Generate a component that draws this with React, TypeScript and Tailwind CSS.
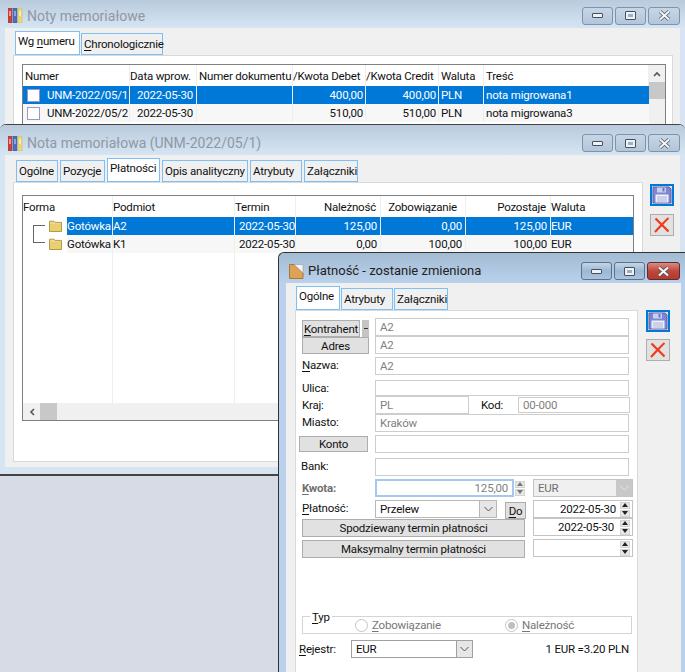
import type { ReactNode } from "react";

const font = "font-['Roboto',sans-serif] text-[11.5px] tracking-[-0.2px] leading-[16px] text-[#111]";

const Binders = () => (
  <svg width="15" height="15" viewBox="0 0 15 15" className="shrink-0">
    <rect x="0" y="0" width="4" height="15" fill="#c8413a" stroke="#a8322c" strokeWidth="0.5" />
    <rect x="5" y="0" width="4" height="15" fill="#4a6fc0" stroke="#35549a" strokeWidth="0.5" />
    <rect x="10" y="0" width="4" height="15" fill="#e8d777" stroke="#c9b655" strokeWidth="0.5" />
    <rect x="1.5" y="3" width="1" height="5" fill="#fff" />
    <rect x="6.5" y="3" width="1" height="5" fill="#cdd9f2" />
    <rect x="11.5" y="3" width="1" height="5" fill="#fff" />
  </svg>
);

const DocIcon = () => (
  <svg width="15" height="15" viewBox="0 0 15 15" className="shrink-0">
    <path d="M0.5 0.5H5L14 9V14.5H0.5Z" fill="#dfa254" stroke="#a8773a" />
    <path d="M5 0.5H14V9Z" fill="#f4f4f4" stroke="#9a9a9a" strokeWidth="0.6" />
  </svg>
);

const Folder = () => (
  <svg width="13" height="12" viewBox="0 0 13 12" className="shrink-0">
    <path d="M0.5 2V1.2H5L6 2.4H12.5V11.5H0.5Z" fill="#eed98a" stroke="#b49a45" />
    <rect x="1" y="4" width="11" height="7" fill="#e9cf72" />
  </svg>
);

const Floppy = () => (
  <svg width="20" height="18" viewBox="0 0 20 18">
    <path d="M1 1H17L19 3V17H1Z" fill="#7c86d4" stroke="#5a64ae" />
    <rect x="5" y="1.5" width="9" height="5" fill="#c9cfee" />
    <rect x="10.5" y="2" width="2" height="3.5" fill="#6a74c2" />
    <rect x="3.5" y="8.5" width="13" height="8" fill="#eef0fa" />
    <path d="M5 11H15M5 13H15M5 15H15" stroke="#aab0dc" />
  </svg>
);

const RedX = () => (
  <svg width="16" height="16" viewBox="0 0 16 16">
    <path d="M1.5 1.5C5 5 10 10 14.5 14.5M14.5 1C10 5 6 10 1 15" stroke="#ef3a1c" strokeWidth="2.2" fill="none" />
  </svg>
);

const TitleButton = ({ kind, active }: { kind: "min" | "max" | "close"; active?: boolean }) => {
  const look =
    kind === "close" && active
      ? "w-[33px] border-[#5e2a34] bg-[linear-gradient(#d98b80,#c0483a_50%,#b23a2e)]"
      : kind === "close"
        ? "w-[32px] border-[#7f93aa] bg-[linear-gradient(#c6d6e6,#b2c6da)]"
        : active
          ? "w-[31px] border-[#5d7188] bg-[linear-gradient(#c4d6e8,#9cb7d2_50%,#aac4de)]"
          : "w-[31px] border-[#7f93aa] bg-[linear-gradient(#c6d6e6,#b2c6da)]";
  return (
    <div className={`h-[18px] rounded-[3px] border flex items-center justify-center ${look}`}>
      {kind === "min" && <div className="w-[11px] h-[5px] bg-[#eef2f6] border border-[#46505c] rounded-[1px]" />}
      {kind === "max" && (
        <div className="w-[11px] h-[9px] bg-[#eef2f6] border border-[#46505c] rounded-[1px] flex items-center justify-center">
          <div className="w-[5px] h-[3px] bg-[#9fb0c2]" />
        </div>
      )}
      {kind === "close" && (
        <svg width="13" height="11" viewBox="0 0 13 11">
          <path d="M2 1.5L11 9.5M11 1.5L2 9.5" stroke="#46505c" strokeWidth="3.6" />
          <path d="M2 1.5L11 9.5M11 1.5L2 9.5" stroke="#f4f6f8" strokeWidth="2.2" />
        </svg>
      )}
    </div>
  );
};

const TitleBar = ({ title, icon, active, pt = "pt-[6px]" }: { title: string; icon: ReactNode; active?: boolean; pt?: string }) => (
  <div className={`flex items-center h-full pl-[8px] pr-[5px] ${pt}`}>
    {icon}
    <span className={`ml-[4px] whitespace-nowrap tracking-normal ${active ? "text-[13px] text-[#222]" : "text-[14px] text-[#8f98a4]"}`}>{title}</span>
    <div className="ml-auto flex gap-[2px]">
      <TitleButton kind="min" active={active} />
      <TitleButton kind="max" active={active} />
      <TitleButton kind="close" active={active} />
    </div>
  </div>
);

const Tab = ({ w, active, children }: { w: string; active?: boolean; children: ReactNode }) => (
  <div
    className={`${w} border border-[#7cc0f5] px-[2px] whitespace-nowrap flex items-center ${
      active ? "h-[24px] bg-white pb-[4px] -mt-[2px]" : "h-[22px] bg-[#f0f0f0]"
    }`}
  >
    {children}
  </div>
);

const U = ({ children }: { children: ReactNode }) => <span className="underline underline-offset-2">{children}</span>;

const GridCell = ({ w, right, className = "", children }: { w: string; right?: boolean; className?: string; children?: ReactNode }) => (
  <div className={`${w} shrink-0 h-full px-[2px] border-r border-[#eeeeee] whitespace-nowrap flex items-center ${right ? "justify-end" : ""} ${className}`}>
    {children}
  </div>
);

const Check = () => <div className="w-[13px] h-[13px] bg-white border border-[#9a9ac0] shrink-0 ml-[4px] mr-[7px]" />;

const notes = [
  { num: "UNM-2022/05/1", date: "2022-05-30", debet: "400,00", credit: "400,00", cur: "PLN", text: "nota migrowana1" },
  { num: "UNM-2022/05/2", date: "2022-05-30", debet: "510,00", credit: "510,00", cur: "PLN", text: "nota migrowana3" },
];

const Notes = () => (
  <div className="absolute left-0 top-0 w-[685px] h-[130px] bg-[#d7e5f3]">
    <div className="h-[28px] bg-[linear-gradient(#b9cbdc,#d6e5f3)]">
      <TitleBar title="Noty memoriałowe" icon={<Binders />} pt="pt-[3px]" />
    </div>
    <div className="mx-[5px] h-[102px] bg-[#f0f0f0] pt-[5px] px-[8px]">
      <div className="flex gap-[1px] pl-[2px]">
        <Tab w="w-[65px]" active>
          Wg&nbsp;<U>n</U>umeru
        </Tab>
        <Tab w="w-[82px]">
          <U>C</U>hronologicznie
        </Tab>
      </div>
      <div className="h-[80px] w-[660px] bg-white border-t border-x border-[#d9d9d9] pt-[8px] pl-[8px]">
        <div className="w-[644px] h-[62px] border-t border-x border-[#808080] flex">
          <div className="w-[626px]">
            <div className="h-[21px] flex">
              <GridCell w="w-[107px]">Numer</GridCell>
              <GridCell w="w-[67px]" className="!px-0">Data wprow.</GridCell>
              <GridCell w="w-[96px]">Numer dokumentu</GridCell>
              <GridCell w="w-[73px]" className="!px-0">/Kwota Debet</GridCell>
              <GridCell w="w-[73px]" className="!px-0">/Kwota Credit</GridCell>
              <GridCell w="w-[45px]">Waluta</GridCell>
              <GridCell w="w-[165px]">Treść</GridCell>
            </div>
            {notes.map((n, i) => (
              <div key={n.num} className={`h-[18px] flex ${i === 0 ? "bg-[#0078d7] text-white" : "bg-[#f7f7f7]"}`}>
                <GridCell w="w-[107px]" className="!px-0">
                  <Check />
                  {n.num}
                </GridCell>
                <GridCell w="w-[67px]" right className="pr-[3px]">{n.date}</GridCell>
                <GridCell w="w-[96px]" />
                <GridCell w="w-[73px]" right>{n.debet}</GridCell>
                <GridCell w="w-[73px]" right>{n.credit}</GridCell>
                <GridCell w="w-[45px]">{n.cur}</GridCell>
                <GridCell w="w-[165px]" className="border-r-0">{n.text}</GridCell>
              </div>
            ))}
          </div>
          <div className="w-[16px] bg-[#f0f0f0] flex flex-col">
            <div className="h-[17px] flex items-center justify-center">
              <svg width="8" height="6" viewBox="0 0 8 6">
                <path d="M1 5L4 2L7 5" stroke="#555" strokeWidth="1.6" fill="none" />
              </svg>
            </div>
            <div className="h-[17px] bg-[#c8c8c8]" />
          </div>
        </div>
      </div>
    </div>
  </div>
);

const rows = [
  { form: "Gotówka", who: "A2", nal: "125,00", zob: "0,00", poz: "125,00" },
  { form: "Gotówka", who: "K1", nal: "0,00", zob: "100,00", poz: "100,00" },
];

const Nota = () => (
  <div className="absolute left-0 top-[124px] w-[685px] h-[352px] bg-[#d7e5f3] border-t border-b-2 border-[#444] rounded-t-[6px]">
    <div className="h-[30px] bg-[linear-gradient(#b9cbdc,#d6e5f3)] rounded-t-[6px]">
      <TitleBar title="Nota memoriałowa (UNM-2022/05/1)" icon={<Binders />} />
    </div>
    <div className="mx-[5px] h-[312px] bg-[#f0f0f0] pt-[5px] px-[8px] flex">
      <div>
        <div className="flex gap-[2px] pl-[3px] items-end">
          <Tab w="w-[42px]">Ogólne</Tab>
          <Tab w="w-[45px]">Pozycje</Tab>
          <Tab w="w-[53px]" active>Płatności</Tab>
          <Tab w="w-[86px]">Opis analityczny</Tab>
          <Tab w="w-[52px]">Atrybuty</Tab>
          <Tab w="w-[54px]">Załączniki</Tab>
        </div>
        <div className="w-[630px] h-[280px] bg-white border border-[#d9d9d9] pt-[12px] pl-[8px]">
          <div className="w-[612px] h-[226px] border border-[#808080] flex flex-col">
            <div className="flex-1 relative">
              <div className="h-[21px] flex">
                <GridCell w="w-[90px]" className="!px-0">Forma</GridCell>
                <GridCell w="w-[122px]" className="!px-0">Podmiot</GridCell>
                <GridCell w="w-[61px]" className="!px-0">Termin</GridCell>
                <GridCell w="w-[85px]" right className="pr-[4px]">Należność</GridCell>
                <GridCell w="w-[85px]" right className="pr-[8px]">Zobowiązanie</GridCell>
                <GridCell w="w-[85px]" right className="pr-[4px]">Pozostaje</GridCell>
                <GridCell w="w-[82px]" className="border-r-0 !px-0">Waluta</GridCell>
              </div>
              {rows.map((r, i) => (
                <div key={r.who} className={`h-[18px] flex relative ${i === 0 ? "text-white" : ""}`}>
                  <div className="w-[44px] shrink-0 flex items-center justify-end pr-[5px]">
                    <Folder />
                  </div>
                  <div className={`flex flex-1 ${i === 0 ? "bg-[#0078d7]" : "bg-[#f7f7f7]"}`}>
                    <GridCell w="w-[46px]" className="!px-0">{r.form}</GridCell>
                    <GridCell w="w-[122px]" className="!px-0">{r.who}</GridCell>
                    <GridCell w="w-[61px]" right className="!px-0 pr-[1px]">2022-05-30</GridCell>
                    <GridCell w="w-[85px]" right className="pr-[3px]">{r.nal}</GridCell>
                    <GridCell w="w-[85px]" right className="pr-[3px]">{r.zob}</GridCell>
                    <GridCell w="w-[85px]" right className="pr-[3px]">{r.poz}</GridCell>
                    <GridCell w="w-[80px]" className="border-r-0 !px-0">EUR</GridCell>
                  </div>
                </div>
              ))}
              <div className="absolute left-[10px] top-[29px] w-[12px] h-[18px] border-l border-y border-[#666]" />
              {[90, 212, 273, 358, 443, 528].map((x) => (
                <div key={x} className="absolute top-[57px] bottom-0 w-px bg-[#eeeeee]" style={{ left: x - 1 }} />
              ))}
            </div>
            <div className="h-[17px] bg-[#f0f0f0] flex items-center">
              <div className="w-[17px] flex justify-center">
                <svg width="6" height="8" viewBox="0 0 6 8">
                  <path d="M5 1L2 4L5 7" stroke="#555" strokeWidth="1.6" fill="none" />
                </svg>
              </div>
              <div className="w-[17px] h-full bg-[#c8c8c8]" />
            </div>
          </div>
        </div>
      </div>
      <div className="ml-[7px] mt-[24px] flex flex-col gap-[8px]">
        <ActionButtons />
      </div>
    </div>
  </div>
);

const ActionButtons = () => (
  <>
    <div className="w-[24px] h-[22px] border-[2px] border-[#0078d7] bg-[#e1e1e1] flex items-center justify-center">
      <Floppy />
    </div>
    <div className="w-[24px] h-[22px] border border-[#adadad] bg-[#e1e1e1] flex items-center justify-center">
      <RedX />
    </div>
  </>
);

const Field = ({ value = "", w = "w-[254px]", right, dark, className = "" }: { value?: string; w?: string; right?: boolean; dark?: boolean; className?: string }) => (
  <div
    className={`${w} h-[18px] bg-white border border-[#cdcdcd] px-[4px] flex items-center whitespace-nowrap ${
      right ? "justify-end" : ""
    } ${dark ? "text-[#1a1a1a]" : "text-[#7f7f7f]"} ${className}`}
  >
    {value}
  </div>
);

const Btn = ({ w, h = "h-[17px]", children, className = "" }: { w: string; h?: string; children: ReactNode; className?: string }) => (
  <div className={`${w} ${h} bg-[#e1e1e1] border border-[#adadad] flex items-center justify-center whitespace-nowrap ${className}`}>
    {children}
  </div>
);

const Chevron = ({ color = "#555" }: { color?: string }) => (
  <svg width="9" height="6" viewBox="0 0 9 6">
    <path d="M0.5 1L4.5 5L8.5 1" stroke={color} fill="none" />
  </svg>
);

const Spin = ({ color = "text-[#222]" }: { color?: string }) => (
  <div className={`w-[10px] h-[15px] shrink-0 ${color} flex flex-col gap-[1px]`}>
    <div className="h-[7px] bg-[#e6e6e6] border border-[#d4d4d4] flex items-center justify-center">
      <div className="w-0 h-0 border-x-[3.5px] border-x-transparent border-b-[4px] border-b-current" />
    </div>
    <div className="h-[7px] bg-[#e6e6e6] border border-[#d4d4d4] flex items-center justify-center">
      <div className="w-0 h-0 border-x-[3.5px] border-x-transparent border-t-[4px] border-t-current" />
    </div>
  </div>
);

const DateRow = ({ value, pr = "pr-[2px]" }: { value?: string; pr?: string }) => (
  <div className="w-[100px] h-[18px] bg-white border border-[#c4c4c4] flex items-center justify-end gap-[2px] pr-[2px]">
    <span className={pr}>{value}</span>
    <Spin />
  </div>
);

const Label = ({ w = "w-[73px]", className = "", children }: { w?: string; className?: string; children: ReactNode }) => (
  <div className={`${w} shrink-0 whitespace-nowrap ${className}`}>{children}</div>
);

const Payment = () => (
  <div className="absolute left-[278px] top-[252px] w-[407px] h-[420px] bg-[#b9d1ea] border-t border-l border-[#333] rounded-tl-[6px]">
    <div className="h-[30px] bg-[linear-gradient(#a3bbd3,#b9d1ea)] rounded-tl-[6px] pl-[2px]">
      <TitleBar title="Płatność - zostanie zmieniona" icon={<DocIcon />} active />
    </div>
    <div className="ml-[7px] mr-[4px] h-[389px] bg-[#f0f0f0] pt-[5px] pl-[9px] flex">
      <div>
        <div className="flex gap-[1px] pl-[1px] items-end">
          <Tab w="w-[44px]" active>Ogólne</Tab>
          <Tab w="w-[52px]">Atrybuty</Tab>
          <Tab w="w-[54px]">Załączniki</Tab>
        </div>
        <div className="w-[343px] h-[362px] bg-white border-t border-l border-r border-[#d9d9d9] pt-[7px] pl-[6px]">
          <div className="flex">
            <div className="w-[73px] shrink-0 flex flex-col pt-[2px]">
              <div className="flex gap-[2px]">
                <Btn w="w-[58px]"><span><U>K</U>ontrahent</span></Btn>
                <div className="w-[7px] h-[17px] bg-[#c4c4c4] flex items-center justify-center">
                  <div className="w-[4px] h-px bg-[#333]" />
                </div>
              </div>
              <Btn w="w-[67px]">Adres</Btn>
            </div>
            <div className="flex flex-col">
              <Field value="A2" />
              <Field value="A2" />
            </div>
          </div>
          <div className="flex mt-[3px]">
            <Label><U>N</U>azwa:</Label>
            <Field value="A2" />
          </div>
          <div className="flex mt-[5px] items-center">
            <Label>Ulica:</Label>
            <Field className="!h-[16px]" />
          </div>
          <div className="flex items-center">
            <Label>Kraj:</Label>
            <Field value="PL" w="w-[94px]" />
            <Label w="w-[49px]" className="pl-[12px]">Kod:</Label>
            <Field value="00-000" w="w-[112px]" className="!h-[16px]" />
          </div>
          <div className="flex">
            <Label>Miasto:</Label>
            <Field value="Kraków" />
          </div>
          <div className="flex mt-[3px] items-center">
            <div className="w-[73px] shrink-0 -ml-[3px] mr-[3px]">
              <Btn w="w-[69px]" h="h-[16px]">Konto</Btn>
            </div>
            <Field />
          </div>
          <div className="flex mt-[5px]">
            <Label className="-ml-[1px] mr-[1px]">Bank:</Label>
            <Field />
          </div>
          <div className="flex mt-[3px] items-center">
            <Label className="font-bold text-[#6f6f6f]"><U>K</U>wota:</Label>
            <div className="w-[150px] flex items-center gap-[1px]">
              <Field value="125,00" right w="w-[141px]" className="!border-[#a4c8ee] border-2" />
              <Spin color="text-[#777]" />
            </div>
            <div className="w-[100px] h-[18px] ml-[8px] bg-[#f0f0f0] border border-[#c4c4c4] pl-[4px] flex items-center justify-between text-[#6f6f6f]">
              EUR
              <div className="w-[16px] h-full bg-[#c8c8c8] flex items-center justify-center">
                <Chevron color="#e6e6e6" />
              </div>
            </div>
          </div>
          <div className="flex mt-[3px]">
            <div className="w-[224px] shrink-0">
              <div className="flex h-[19px]">
                <Label><U>P</U>łatność:</Label>
                <div className="w-[122px] h-[18px] bg-white border border-[#b8b8b8] pl-[4px] flex items-center justify-between">
                  Przelew
                  <div className="w-[17px] h-full bg-[#e6e6e6] border-l border-[#b8b8b8] flex items-center justify-center">
                    <Chevron />
                  </div>
                </div>
                <Btn w="w-[21px]" className="ml-[8px] mt-[2px] relative"><span><U>D</U>o</span></Btn>
              </div>
              <Btn w="w-[223px]" h="h-[18px]">Spodziewany termin płatności</Btn>
              <Btn w="w-[223px]" h="h-[18px]" className="mt-[3px]">Maksymalny termin płatności</Btn>
            </div>
            <div className="ml-[7px] flex flex-col">
              <DateRow value="2022-05-30" />
              <DateRow value="2022-05-30" pr="pr-[4px]" />
              <div className="mt-[3px]">
                <DateRow />
              </div>
            </div>
          </div>
          <div className="relative mt-[58px] w-[330px] h-[18px] border border-[#d4d4d4] flex items-center">
            <div className="absolute left-[7px] -top-[7px] bg-white px-[2px] leading-[14px]"><U>T</U>yp</div>
            <div className="ml-[52px] w-[150px] flex items-center gap-[4px] text-[#777]">
              <div className="w-[13px] h-[13px] rounded-full border border-[#c4c4c4] bg-white" />
              <span><U>Z</U>obowiązanie</span>
            </div>
            <div className="flex items-center gap-[4px] text-[#777]">
              <div className="w-[13px] h-[13px] rounded-full border border-[#c4c4c4] bg-white flex items-center justify-center">
                <div className="w-[7px] h-[7px] rounded-full bg-[#c0c0c0]" />
              </div>
              <span><U>N</U>ależność</span>
            </div>
          </div>
          <div className="flex mt-[6px] items-center -ml-[3px]">
            <Label w="w-[52px]"><U>R</U>ejestr:</Label>
            <div className="w-[122px] h-[18px] bg-white border border-[#a0a0a0] pl-[4px] flex items-center justify-between">
              EUR
              <div className="w-[16px] h-full bg-[#e6e6e6] border-l border-[#a0a0a0] flex items-center justify-center">
                <Chevron />
              </div>
            </div>
            <div className="w-[156px] text-right">1 EUR =3.20 PLN</div>
          </div>
        </div>
      </div>
      <div className="ml-[8px] mt-[22px] flex flex-col gap-[7px]">
        <ActionButtons />
      </div>
    </div>
  </div>
);

export default function App() {
  return (
    <div className={`relative w-[685px] h-[672px] overflow-hidden bg-[#d6dbe6] ${font}`}>
      <Notes />
      <Nota />
      <Payment />
    </div>
  );
}
